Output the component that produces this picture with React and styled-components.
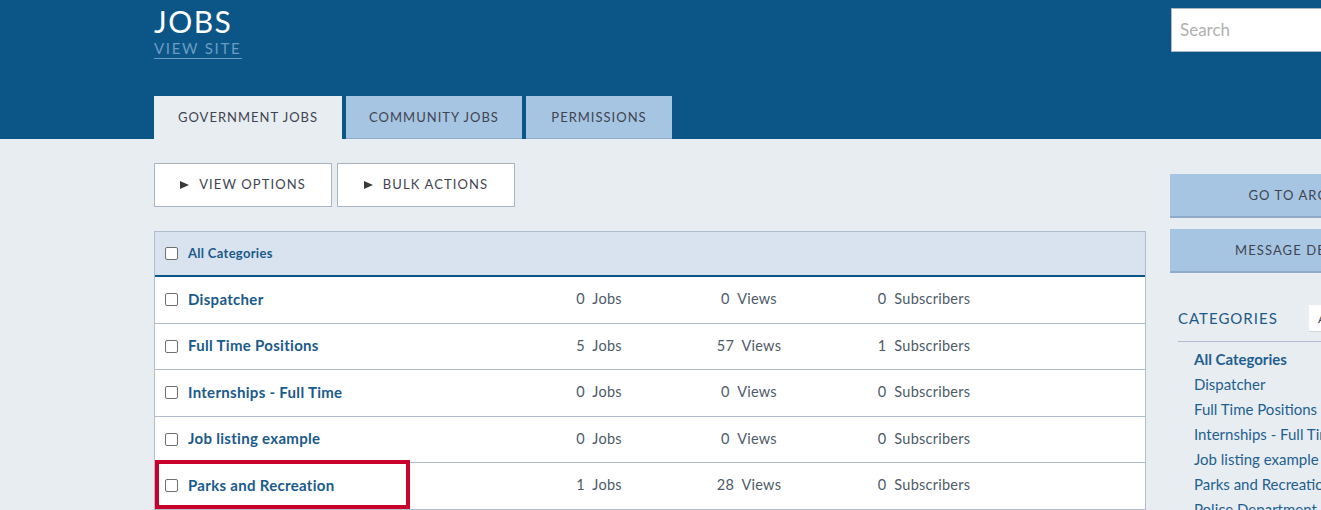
import React from "react";
import styled, { createGlobalStyle } from "styled-components";

const Global = createGlobalStyle`
  html, body { margin: 0; padding: 0; height: 510px; overflow: hidden; background: #e8edf1; }
  body { font-family: "Lato", "Noto Sans", sans-serif; color: #3f4450; }
  * { box-sizing: border-box; }
`;
const Page = styled.div`width: 1600px; height: 510px; overflow: hidden;`;
const Header = styled.header`
  height: 139px; background: #0c5587; padding-left: 154px; display: flex; flex-direction: column; justify-content: space-between;
`;
const HeaderTop = styled.div`display: flex; width: 1300px; padding-top: 8px;`;
const Brand = styled.div`width: 1017px; display: flex; flex-direction: column; align-items: flex-start;`;
const Title = styled.h1`
  margin: -2px 0 0; font-size: 30px; line-height: 30px; font-weight: 400; color: #fff; letter-spacing: 1.5px;
`;
const ViewSite = styled.a`
  margin-top: 2px; font-size: 15px; line-height: 20px; letter-spacing: 1.7px; color: #6a9cc4; border-bottom: 1px solid #6a9cc4; padding-right: 1px;
`;
const Search = styled.input`
  width: 280px; height: 44px; background: #fff; border: 1px solid #a9b8c9; padding: 0 8px 2px; font: 400 17px "Lato", sans-serif; color: #333;
  &::placeholder { color: #b0b0b0; opacity: 1; }
`;
const Tabs = styled.nav`display: flex; gap: 4px;`;
const Tab = styled.a`
  height: 43px; width: ${p => p.$w}px; display: flex; align-items: center; justify-content: center; padding-bottom: 1px;
  font-size: 13px; letter-spacing: 1px; color: #3f4450;
  background: ${p => (p.$active ? "#e8edf1" : "#a6c5e2")};
  ${p => (p.$active ? "" : "border-bottom: 1px solid #8eacc9;")}
`;
const Body = styled.div`display: flex; gap: 24px; padding-left: 154px; padding-top: 24px;`;
const Main = styled.main`width: 992px; flex: none;`;
const Actions = styled.div`display: flex; gap: 5px; margin-bottom: 24px;`;
const ActionButton = styled.button`
  width: 178px; height: 44px; background: #fff; border: 1px solid #a9b5c4; display: flex; align-items: center; justify-content: center; gap: 10px;
  font: 400 13px "Lato", sans-serif; letter-spacing: 1.1px; color: #3f4450; padding: 0 0 2px;
`;
const Arrow = styled.svg`width: 9px; height: 8px; fill: #3a3a3a; margin-top: 2px;`;
const Table = styled.section`
  position: relative; border: 1px solid #b0bdcf; border-bottom: none; background: #fff;
`;
const TableHead = styled.div`
  height: 45px; background: #d9e3f0; border-bottom: 2px solid #0c5587; display: flex; align-items: center; padding-left: 10px; gap: 10px;
  font-size: 13px; font-weight: 700; letter-spacing: 0.3px; color: #1a5a8a;
`;
const Box = styled.span`
  width: 13px; height: 13px; flex: none; background: #fff; border: 1px solid #6f6f6f; border-radius: 2px;
`;
const LabelText = styled.span`margin-top: -2px; white-space: nowrap;`;
const Row = styled.div`
  height: 46.5px; display: grid; grid-template-columns: 369px 150px 150px 200px 1fr; align-items: center; border-bottom: 1px solid #b0bdcf;
`;
const NameCell = styled.div`
  display: flex; align-items: center; gap: 10px; padding-left: 10px; font-size: 15px; font-weight: 700; letter-spacing: 0.3px; color: #1a5a8a;
`;
const Stat = styled.div`
  text-align: center; font-size: 14.5px; letter-spacing: 0.25px; color: #4d5a68; white-space: pre; margin-top: -2px;
`;
const Highlight = styled.div`
  position: absolute; left: 0; top: 228px; width: 255px; height: 49px; border: 4px solid #c8002a; pointer-events: none;
`;
const Side = styled.aside`width: 270px; flex: none; padding-top: 11px;`;
const SideButton = styled.a`
  height: 44px; margin-bottom: 11px; background: #a6c5e2; border-bottom: 2px solid #8eacc9; display: flex; align-items: center; justify-content: center; padding-bottom: 1px;
  font-size: 13px; letter-spacing: 1.1px; color: #3f4450;
`;
const SideHead = styled.div`
  margin: 32px 0 0 8px; height: 37px; display: flex; justify-content: space-between; border-bottom: 1px solid #b0bdcf; align-items: flex-start;
`;
const SideTitle = styled.h2`
  margin: 4px 0 0; font-size: 15px; line-height: 18px; font-weight: 400; letter-spacing: 1px; color: #1f5a86;
`;
const SmallButton = styled.a`
  width: 131px; height: 27px; background: #fff; border-bottom: 1px solid #d2d6da; padding-left: 9px; display: flex; align-items: center; font-size: 12px; letter-spacing: 1px; color: #3f4450;
`;
const CatList = styled.ul`margin: 5px 0 0; padding: 0 0 0 24px; list-style: none;`;
const Cat = styled.li`
  height: 25px; line-height: 25px; font-size: 15px; white-space: nowrap; color: #1f5f90; font-weight: ${p => (p.$bold ? 700 : 400)};
`;

const rows = [
  ["Dispatcher", 0, 0, 0],
  ["Full Time Positions", 5, 57, 1],
  ["Internships - Full Time", 0, 0, 0],
  ["Job listing example", 0, 0, 0],
  ["Parks and Recreation", 1, 28, 0],
];
const cats = ["Dispatcher", "Full Time Positions", "Internships - Full Time", "Job listing example", "Parks and Recreation", "Police Department"];
const Tri = () => <Arrow viewBox="0 0 9 8"><path d="M0 0L9 4L0 8Z" /></Arrow>;

export default function App() {
  return (
    <Page>
      <Global />
      <Header>
        <HeaderTop>
          <Brand>
            <Title>JOBS</Title>
            <ViewSite>VIEW SITE</ViewSite>
          </Brand>
          <Search placeholder="Search" />
        </HeaderTop>
        <Tabs>
          <Tab $active $w={188}>GOVERNMENT JOBS</Tab>
          <Tab $w={176}>COMMUNITY JOBS</Tab>
          <Tab $w={146}>PERMISSIONS</Tab>
        </Tabs>
      </Header>
      <Body>
        <Main>
          <Actions>
            <ActionButton><Tri />VIEW OPTIONS</ActionButton>
            <ActionButton><Tri />BULK ACTIONS</ActionButton>
          </Actions>
          <Table>
            <TableHead><Box /><LabelText>All Categories</LabelText></TableHead>
            {rows.map(r => (
              <Row key={r[0]}>
                <NameCell><Box /><LabelText>{r[0]}</LabelText></NameCell>
                <Stat>{r[1]}  Jobs</Stat>
                <Stat>{r[2]}  Views</Stat>
                <Stat>{r[3]}  Subscribers</Stat>
              </Row>
            ))}
            <Highlight />
          </Table>
        </Main>
        <Side>
          <SideButton>GO TO ARCHIVE</SideButton>
          <SideButton>MESSAGE DELIVERY</SideButton>
          <SideHead>
            <SideTitle>CATEGORIES</SideTitle>
            <SmallButton>ADD</SmallButton>
          </SideHead>
          <CatList>
            <Cat $bold>All Categories</Cat>
            {cats.map(c => <Cat key={c}>{c}</Cat>)}
          </CatList>
        </Side>
      </Body>
    </Page>
  );
}
